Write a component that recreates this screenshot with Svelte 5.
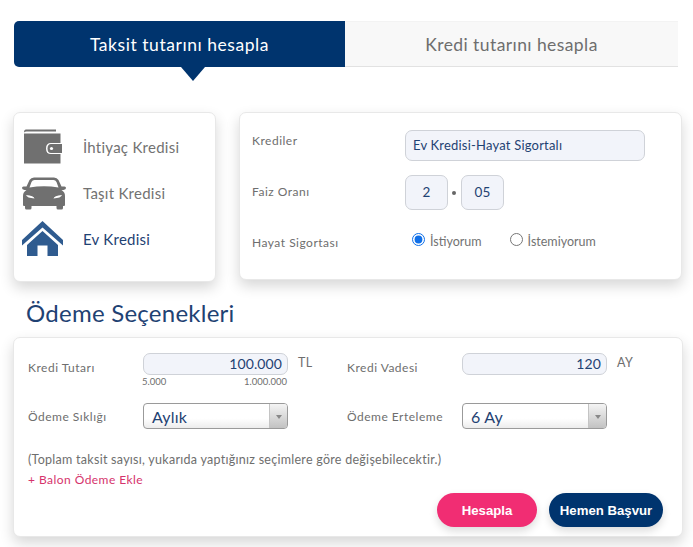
<script>
  const products = [
    { name: 'İhtiyaç Kredisi', icon: 'wallet' },
    { name: 'Taşıt Kredisi', icon: 'car' },
    { name: 'Ev Kredisi', icon: 'house', active: true }
  ];
</script>

<main class="page">
  <nav class="tabs">
    <button class="tab active">Taksit tutarını hesapla</button>
    <button class="tab">Kredi tutarını hesapla</button>
  </nav>

  <section class="top">
    <div class="card products">
      {#each products as p}
        <div class="product" class:on={p.active}>
          <span class="icon">
            {#if p.icon === 'wallet'}
              <svg class="wallet" width="44" height="36" viewBox="0 0 44 36">
                <path d="M3 0.500H33V2.500H3.500Q2 2.500 1 3.500Q1 0.500 3 0.500Z" fill="#707070"/>
                <path d="M1 4.500H37.500V14H28Q23 14 23 19.500Q23 25 28 25H37.500V34.500H1Z" fill="#707070"/>
                <path d="M28 15H39V24H28Q24.500 24 24.500 19.500Q24.500 15 28 15Z" fill="#707070"/>
                <circle cx="28.500" cy="19.500" r="1.600" fill="#fff"/>
              </svg>
            {:else if p.icon === 'car'}
              <svg width="44" height="33" viewBox="0 0 44 33">
                <path fill="#707070" fill-rule="evenodd" d="M12 0.500H32Q35 0.500 36.500 3L39.500 9.500H42.500Q44 9.500 44 11Q44 12.500 41.500 13L39.500 13.300Q43 15 43 19V28Q43 29 42 29H41V31Q41 32.500 39.500 32.500H36Q34.500 32.500 34.500 31V29H9.500V31Q9.500 32.500 8 32.500H4.500Q3 32.500 3 31V29H2Q1 29 1 28V19Q1 15 4.500 13.300L2.500 13Q0 12.500 0 11Q0 9.500 1.500 9.500H4.500L7.500 3Q9 0.500 12 0.500ZM12.500 3Q10.500 3 9.500 5L7.500 10.500Q22 8 36.500 10.500L34.500 5Q33.500 3 31.500 3ZM4 18Q5 21 12.500 21.500Q12 18.500 4 18ZM40 18Q32 18.500 31.500 21.500Q39 21 40 18Z"/>
              </svg>
            {:else}
              <svg width="42" height="36" viewBox="0 0 42 36">
                <path fill="#2f5b8f" d="M20.500 0L41 19V24.500L20.500 6.500L0 24.500V19Z"/>
                <path fill="#2f5b8f" d="M20.500 10L36 24V35H25.500V24.500H15.500V35H5V24Z"/>
              </svg>
            {/if}
          </span>
          <span class="product-name">{p.name}</span>
        </div>
      {/each}
    </div>

    <div class="card credit">
      <div class="credit-row first">
        <span class="label">Krediler</span>
        <div class="box wide">Ev Kredisi-Hayat Sigortalı</div>
      </div>
      <div class="credit-row second">
        <span class="label">Faiz Oranı</span>
        <div class="rate">
          <div class="box small">2</div>
          <span class="dot"></span>
          <div class="box small">05</div>
        </div>
      </div>
      <div class="credit-row third">
        <span class="label">Hayat Sigortası</span>
        <div class="radios">
          <label class="radio yes"><input type="radio" name="sigorta" checked /> İstiyorum</label>
          <label class="radio"><input type="radio" name="sigorta" /> İstemiyorum</label>
        </div>
      </div>
    </div>
  </section>

  <h2 class="title">Ödeme Seçenekleri</h2>

  <section class="card options">
    <div class="grid">
      <div class="field">
        <span class="label lbl">Kredi Tutarı</span>
        <div class="control">
          <div class="amount">100.000</div>
          <div class="limits"><span>5.000</span><span>1.000.000</span></div>
        </div>
        <span class="unit">TL</span>
      </div>
      <div class="field">
        <span class="label lbl">Kredi Vadesi</span>
        <div class="control"><div class="amount">120</div></div>
        <span class="unit">AY</span>
      </div>
      <div class="field pick">
        <span class="label lbl">Ödeme Sıklığı</span>
        <div class="select">
          <span class="select-text">Aylık</span>
          <span class="select-arrow"></span>
        </div>
      </div>
      <div class="field pick">
        <span class="label lbl">Ödeme Erteleme</span>
        <div class="select">
          <span class="select-text">6 Ay</span>
          <span class="select-arrow"></span>
        </div>
      </div>
    </div>
    <p class="note">(Toplam taksit sayısı, yukarıda yaptığınız seçimlere göre değişebilecektir.)</p>
    <a class="balloon" href="#top">+ Balon Ödeme Ekle</a>
    <div class="actions">
      <button class="btn pink">Hesapla</button>
      <button class="btn navy">Hemen Başvur</button>
    </div>
  </section>
</main>

<style>
  :global(body) {
    margin: 0;
    background: #fff;
    font-family: Lato, "Open Sans", sans-serif;
    color: #6e6e6e;
  }
  .page {
    width: 693px;
    height: 547px;
    overflow: hidden;
    box-sizing: border-box;
    padding-top: 21px;
  }
  .tabs {
    display: flex;
    margin-left: 14px;
    width: 664px;
    height: 46px;
  }
  .tab {
    flex: 0 0 333px;
    border: 0;
    border-bottom: 1px solid #e2e2e2;
    border-top: 1px solid #f3f3f3;
    background: #f8f8f8;
    color: #6e6e6e;
    font: 400 17.500px Lato, sans-serif;
    letter-spacing: 0.42px;
    padding: 0;
  }
  .tab.active {
    flex: 0 0 331px;
    position: relative;
    border: 0;
    background: #00346e;
    color: #fff;
    letter-spacing: 0.55px;
    border-radius: 5px 0 0 5px;
  }
  .tab.active::after {
    content: "";
    position: absolute;
    left: 167px;
    top: 100%;
    border: 12px solid transparent;
    border-top: 14px solid #00346e;
    border-bottom: 0;
  }
  .card {
    box-sizing: border-box;
    background: #fff;
    border: 1px solid #e8e8e8;
    border-radius: 7px;
    box-shadow: 0 6px 14px rgba(0, 0, 0, 0.16);
  }
  .top {
    display: flex;
    align-items: flex-start;
    gap: 23px;
    margin: 45px 0 0 13px;
  }
  .products {
    width: 203px;
    height: 170px;
    padding-top: 11px;
  }
  .product {
    display: flex;
    align-items: center;
    height: 46px;
    font-size: 15px;
    letter-spacing: 0.25px;
    color: #727272;
  }
  .product.on { color: #1f4273; }
  .icon {
    flex: 0 0 69px;
    display: flex;
    padding-left: 8px;
    box-sizing: border-box;
  }
  .icon svg { display: block; }
  .icon .wallet { margin-left: 1px; }
  .credit {
    width: 443px;
    height: 168px;
    padding: 17px 0 0 12px;
  }
  .credit-row {
    display: grid;
    grid-template-columns: 153px 1fr;
    align-items: center;
  }
  .label {
    font-size: 12px;
    letter-spacing: 0.5px;
    color: #6e6e6e;
  }
  .first { height: 31px; }
  .first .label { margin-bottom: 11px; }
  .second { height: 35px; margin-top: 14px; }
  .second .label { margin-bottom: 3px; }
  .third { height: 20px; margin-top: 22px; }
  .box {
    box-sizing: border-box;
    background: #f2f4fa;
    border: 1px solid #cfd2d8;
    border-radius: 7px;
    color: #1f4273;
    font-size: 13px;
    letter-spacing: 0.2px;
  }
  .wide {
    width: 240px;
    height: 31px;
    line-height: 29px;
    padding-left: 7px;
  }
  .rate { display: flex; align-items: center; }
  .small {
    width: 43px;
    height: 35px;
    line-height: 33px;
    text-align: center;
    font-size: 13.500px;
  }
  .dot {
    width: 4px;
    height: 4px;
    border-radius: 50%;
    background: #666;
    margin: 0 5px 0 4px;
  }
  .radios {
    display: flex;
    gap: 28px;
    padding-left: 7px;
    margin-top: -1px;
  }
  .radio {
    display: flex;
    align-items: center;
    gap: 5px;
    font-size: 12.500px;
    color: #727272;
  }
  .radio input {
    width: 13px;
    height: 13px;
    margin: 0 0 4px 0;
    accent-color: #0f6fe8;
  }
  .title {
    margin: 17px 0 0 26px;
    height: 38px;
    font-size: 24px;
    line-height: 27px;
    font-weight: 400;
    letter-spacing: 0.25px;
    color: #1f4273;
  }
  .options {
    position: relative;
    margin-left: 13px;
    width: 670px;
    height: 200px;
    padding: 15px 0 0 14px;
  }
  .grid {
    display: grid;
    grid-template-columns: 319px 1fr;
    grid-template-rows: 50px 26px;
  }
  .field {
    display: flex;
    align-items: flex-start;
  }
  .lbl {
    flex: 0 0 115px;
    padding-top: 6px;
    line-height: 17px;
  }
  .pick .lbl { padding-top: 5px; }
  .control { flex: 0 0 145px; }
  .amount {
    box-sizing: border-box;
    height: 22px;
    line-height: 20px;
    padding-right: 5px;
    text-align: right;
    background: #f2f4fa;
    border: 1px solid #cfd2d8;
    border-radius: 7px;
    color: #1f4273;
    font-size: 14px;
    letter-spacing: 0.1px;
  }
  .limits {
    display: flex;
    justify-content: space-between;
    margin-left: -1px;
    padding-right: 1px;
    font-size: 9.500px;
    line-height: 13px;
    color: #6e6e6e;
  }
  .unit {
    margin: 2px 0 0 10px;
    font-size: 12.500px;
    line-height: 16px;
    letter-spacing: 0.3px;
  }
  .select {
    box-sizing: border-box;
    flex: 0 0 145px;
    height: 26px;
    display: flex;
    justify-content: space-between;
    border: 1px solid #9a9a9a;
    border-radius: 4px;
    background: linear-gradient(#fff 60%, #ececec);
    overflow: hidden;
  }
  .select-text {
    padding-left: 8px;
    line-height: 25px;
    font-size: 16px;
    letter-spacing: 0.2px;
    color: #1f4273;
  }
  .select-arrow {
    position: relative;
    width: 17px;
    border-left: 1px solid #c4c4c4;
    background: linear-gradient(#f4f4f4, #c2c2c2);
  }
  .select-arrow::after {
    content: "";
    position: absolute;
    left: 6px;
    top: 11px;
    border: 3px solid transparent;
    border-top: 4px solid #888;
    border-bottom: 0;
  }
  .note {
    margin: 23px 0 0 0;
    font-size: 12.500px;
    line-height: 16px;
    letter-spacing: 0.27px;
    color: #6e6e6e;
  }
  .balloon {
    display: block;
    margin-top: 4px;
    font-size: 12px;
    line-height: 16px;
    letter-spacing: 0.45px;
    color: #d6336c;
    text-decoration: none;
  }
  .actions {
    position: absolute;
    right: 19px;
    top: 155px;
    display: flex;
    gap: 12px;
  }
  .btn {
    height: 34px;
    border: 0;
    border-radius: 17px;
    color: #fff;
    font: 700 13.200px "Liberation Sans", Arial, sans-serif;
    box-shadow: 0 4px 8px rgba(0, 0, 0, 0.14);
    padding: 0;
  }
  .pink { width: 100px; background: #f12d73; }
  .navy { width: 114px; background: #00346e; }
</style>
